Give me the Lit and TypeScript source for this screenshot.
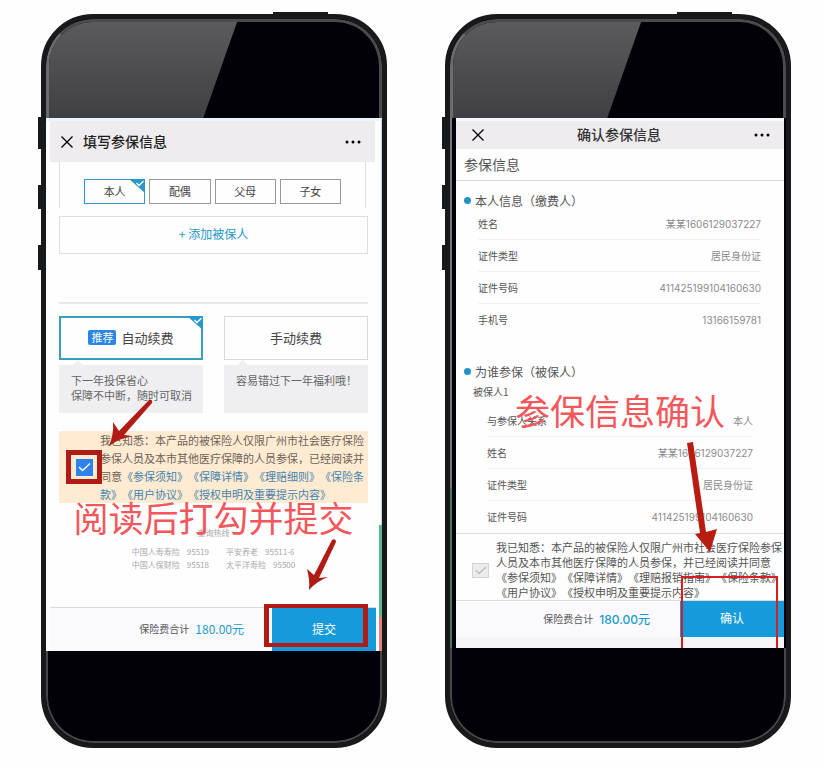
import { LitElement, html, css, svg } from "lit";
import { customElement, property } from "lit/decorators.js";

const base = css`
  *, *::before, *::after { box-sizing: border-box; }
  button, input { margin: 0; padding: 0; font: inherit; border-radius: 0; }
  button { cursor: pointer; }
  a { text-decoration: none; color: inherit; }
  h1, h2, h3, p, dl, dd, dt { margin: 0; font-weight: 400; font-size: inherit; }
  .bar { display: flex; align-items: center; background: #eeecee; }
  .bar h1 { padding-bottom: 2px; }
  .icon-button { border: 0; background: none; display: flex; }
  .caption {
    position: absolute; left: 0; right: 0; text-align: center; white-space: nowrap;
    font-size: 35px; line-height: 36px; color: #f2575c; pointer-events: none; z-index: 2;
  }
  .arrow { position: absolute; overflow: visible; pointer-events: none; z-index: 3; }
  .checkbox { position: relative; display: flex; }
  .checkbox input { appearance: none; display: block; }
  .checkbox .tick { position: absolute; inset: 0; margin: auto; pointer-events: none; }
  .total { display: flex; align-items: center; gap: 6px; margin-left: auto; padding-bottom: 2px; font-size: 10px; color: #555; }
  .price { font-size: 12px; color: #1c9bcf; }
  .footer { display: flex; align-items: stretch; background: #fafafd; border-top: 1px solid #dcdce0; }
  .pay { position: relative; display: flex; }
  .pay button { flex: 1; padding-bottom: 3px; border: 0; background: #159adc; color: #fff; font-size: 12px; }
`;

const closeIcon = svg`<svg width="12" height="12" viewBox="0 0 12 12" fill="none" stroke="currentColor" stroke-width="1.3"><path d="M.5 .5 11.5 11.5M11.5 .5 .5 11.5"/></svg>`;
const moreIcon = svg`<svg width="16" height="4" viewBox="0 0 16 4" fill="currentColor"><circle cx="2" cy="2" r="1.5"/><circle cx="8" cy="2" r="1.5"/><circle cx="14" cy="2" r="1.5"/></svg>`;

@customElement("phone-frame")
export class PhoneFrame extends LitElement {
  static styles = [base, css`
    :host { display: block; position: relative; min-width: 0; }
    .key { position: absolute; background: #17191b; }
    .power { top: -2px; right: 59px; width: 55px; height: 4px; }
    .mute { left: -3px; top: 103px; width: 5px; height: 32px; }
    .up { left: -3px; top: 171px; width: 5px; height: 24px; }
    .down { left: -3px; top: 231px; width: 5px; height: 25px; }
    .shell { position: relative; border: 5px solid #17191b; border-radius: 52px; background: #020108; overflow: hidden; }
    .top { height: 99px; border: 3px solid #4b4b4f; border-left-color: #6c6c6f; border-bottom: 0; border-radius: 47px 47px 0 0; overflow: hidden; }
    .glare { height: 100%; width: 57%; background: linear-gradient(#5b5b5d, #403f43); clip-path: polygon(0 0, 100% 0, 82% 100%, 0 100%); }
    .bottom { height: 92px; border: 2px solid #47474b; border-top: 0; border-radius: 0 0 47px 47px; }
    :host([tall]) .bottom { height: 95px; }
  `];
  render() {
    return html`
      <div class="key power"></div><div class="key mute"></div>
      <div class="key up"></div><div class="key down"></div>
      <div class="shell">
        <div class="top"><div class="glare"></div></div>
        <slot></slot>
        <div class="bottom"></div>
      </div>`;
  }
}

@customElement("fill-screen")
export class FillScreen extends LitElement {
  static styles = [base, css`
    :host { display: block; position: relative; background: #fefefe; border-top: 3px solid #edf4fb; border-right: 1px solid #bfd5e6; color: #555; }
    .bar { height: 41px; margin: 0 6px 0 4px; padding: 0 14px 0 11px; gap: 10px; color: #1e1e20; }
    .bar h1 { flex: 1; font-size: 14px; font-weight: 500; }
    .body { margin: 0 13px; }
    .relations { display: grid; grid-template-columns: repeat(4, 1fr); gap: 4px; margin-right: 2px; padding: 17px 24px 4px; border: solid #dcdfe2; border-width: 0 1px; }
    .choice { position: relative; display: flex; align-items: center; justify-content: center; padding-bottom: 2px; color: #444; }
    .choice input { appearance: none; position: absolute; inset: 0; border: 1px solid #999; }
    .choice input:checked { border: 1px solid #2f9fc8; }
    .choice .corner { position: absolute; top: 0; right: 0; display: none; }
    .choice input:checked ~ .corner { display: block; }
    .small { height: 25px; font-size: 11px; }
    .large { height: 44px; font-size: 13px; gap: 5px; }
    .large input { border-color: #d8dadd; }
    .large input:checked { border: 2px solid #38a0be; }
    .badge { padding: 0 3px; border-radius: 2px; background: #2a86e6; color: #fff; font-size: 11px; line-height: 15px; }
    .add { display: block; width: 100%; height: 38px; margin-top: 8px; padding-bottom: 4px; border: 1px solid #dcdfe2; background: none; color: #2797c8; font-size: 12px; }
    .rule { border: 0; height: 2px; margin: 48px 0 12px; background: #e6e9ec; }
    .renewals { display: grid; grid-template-columns: 1fr 1fr; column-gap: 21px; row-gap: 5px; }
    .note { position: relative; min-height: 48px; padding: 8px 0 10px 12px; background: #efeef1; font-size: 11px; line-height: 15px; white-space: nowrap; color: #666; }
    .note::before { content: ""; position: absolute; left: 14px; top: -5px; border: solid transparent; border-width: 0 5px 5px; border-bottom-color: #efeef1; }
    .consent { display: flex; align-items: center; margin-top: 18px; padding: 0 0 0 17px; gap: 7px; background: #ffebd2; font-size: 11px; line-height: 18px; color: #6d6257; }
    .consent p { flex: 1; text-spacing-trim: space-all; }
    .consent a { color: #4583ae; }
    .checkbox input { width: 17px; height: 17px; background: #2a82ea; }
    .mark { position: absolute; inset: -9px -9px -8px -10px; border: 5px solid #b01b16; z-index: 2; }
    .arrow.to-check { left: 30px; bottom: 30px; }
    .hotline { position: relative; padding: 23px 0 36px; font-size: 8px; line-height: 13px; color: #a9a9a9; }
    .hotline h2 { text-align: center; margin-bottom: 6px; }
    .hotline .caption { top: -4px; }
    .lines { display: grid; grid-template-columns: auto auto; justify-content: center; column-gap: 17px; }
    .lines div { display: flex; gap: 7px; }
    .footer { margin: 0 5px 0 4px; }
    .total { padding-right: 28px; }
    .pay { width: 104px; height: 43px; }
    .pay .mark { inset: -4px 8px 4px -8px; border-width: 4px 5px; }
    .arrow.to-pay { left: 34px; top: -70px; }
    .edge { position: absolute; right: -1px; bottom: 0; width: 3px; height: 126px; background: linear-gradient(#5cb88e 92px, #e5807c 92px); }
  `];
  private corner = svg`<svg class="corner" width="16" height="14" viewBox="0 0 16 14"><path d="M0 0H16V14Z" fill="#2797c8"/><path d="M7.500 4 10 6.500 14.500 2" fill="none" stroke="#fff" stroke-width="1.300"/></svg>`;
  render() {
    return html`
      <header class="bar">
        <button class="icon-button" aria-label="关闭">${closeIcon}</button>
        <h1>填写参保信息</h1>
        <button class="icon-button" aria-label="更多">${moreIcon}</button>
      </header>
      <div class="body">
        <div class="relations">
          ${["本人", "配偶", "父母", "子女"].map((name, i) => html`
            <label class="choice small"><input type="radio" name="relation" .checked=${i === 0}>${this.corner}<span>${name}</span></label>`)}
        </div>
        <button class="add">+ 添加被保人</button>
        <hr class="rule">
        <div class="renewals">
          <label class="choice large"><input type="radio" name="renewal" .checked=${true}>${this.corner}<span class="badge">推荐</span><span>自动续费</span></label>
          <label class="choice large"><input type="radio" name="renewal"><span>手动续费</span></label>
          <p class="note">下一年投保省心<br>保障不中断，随时可取消</p>
          <p class="note">容易错过下一年福利哦！</p>
        </div>
        <div class="consent">
          <div class="checkbox">
            <input id="agree" type="checkbox" .checked=${true} aria-label="我已知悉">
            <svg class="tick" width="13" height="10" viewBox="0 0 13 10" fill="none" stroke="#fff" stroke-width="1.500"><path d="M1 5 4.500 8.500 12 1.500"/></svg>
            <span class="mark"></span>
            <svg class="arrow to-check" width="46" height="46" viewBox="0 0 46 46" fill="#b01b16"><path d="M43 0Q47-1 46 3L18 35 26 36Q14 38 3 46Q8 34 7 22L13 31Z"/></svg>
          </div>
          <p><label for="agree">我已知悉：本产品的被保险人仅限广州市社会医疗保险参保人员及本市其他医疗保障的人员参保，已经阅读并同意</label><a href="#">《参保须知》</a><a href="#">《保障详情》</a><a href="#">《理赔细则》</a><a href="#">《保险条款》</a><a href="#">《用户协议》</a><a href="#">《授权申明及重要提示内容》</a></p>
        </div>
        <section class="hotline">
          <div class="caption">阅读后打勾并提交</div>
          <h2>查询热线</h2>
          <dl class="lines">
            ${[["中国人寿寿险", "95519"], ["平安养老", "95511-6"], ["中国人保财险", "95518"], ["太平洋寿险", "95500"]].map(
              ([name, tel]) => html`<div><dt>${name}</dt><dd>${tel}</dd></div>`)}
          </dl>
        </section>
      </div>
      <footer class="footer">
        <div class="total">保险费合计<span class="price">180.00元</span></div>
        <div class="pay">
          <button>提交</button><span class="mark"></span>
          <svg class="arrow to-pay" width="30" height="54" viewBox="0 0 30 54" fill="#b01b16"><path d="M26 2Q30 0 30 4L13 40 22 39Q11 43 3 52Q4 42 1 31L8 37Z"/></svg>
        </div>
      </footer>
      <div class="edge"></div>`;
  }
}

@customElement("info-rows")
export class InfoRows extends LitElement {
  static styles = [base, css`
    :host { display: block; }
    .row { display: flex; justify-content: space-between; align-items: center; height: 32px; border-bottom: 1px solid #f1f1f3; font-size: 10px; color: #555; }
    .row:last-child { border-bottom-color: transparent; }
    .row dd { font-family: Inter, "Noto Sans CJK SC", sans-serif; color: #8c8c8c; }
  `];
  @property({ attribute: false }) rows: string[][] = [];
  render() {
    return html`<dl>${this.rows.map(([k, v]) => html`<div class="row"><dt>${k}</dt><dd>${v}</dd></div>`)}</dl>`;
  }
}

@customElement("confirm-screen")
export class ConfirmScreen extends LitElement {
  static styles = [base, css`
    :host { display: block; position: relative; padding: 0 2px 0 6px; color: #555; }
    .edge { position: absolute; left: 0; top: 0; bottom: 0; width: 2px; background: linear-gradient(to top, #4d7560 160px, #77777b 160px); }
    .page { background: #fefefe; border-top: 3px solid #f5f8fc; }
    .bar { height: 28px; padding: 0 14px 0 16px; color: #555; }
    .bar h1 { flex: 1; text-align: center; font-size: 14px; font-weight: 500; color: #333; }
    .title { height: 32px; padding-left: 8px; border-bottom: 1px solid #dcdcde; font-size: 14px; line-height: 31px; }
    .group { padding: 12px 0 0 8px; }
    .group + .group { position: relative; padding-top: 28px; }
    .group h3 { display: flex; align-items: center; gap: 4px; font-size: 12px; line-height: 15px; text-spacing-trim: space-all; }
    .group h3::before { content: ""; width: 7px; height: 7px; border-radius: 50%; background: #2492c8; }
    .own { margin: 0 23px 0 14px; }
    .insured { margin: 0 31px 0 23px; }
    .who { margin: 5px 0 6px 9px; font-size: 10px; line-height: 15px; }
    .group .caption { top: 56px; }
    .consent { display: flex; align-items: center; padding: 6px 0 0 16px; gap: 7px; border-top: 1px solid #dcdcde; font-size: 11px; line-height: 15px; }
    .consent p { flex: 1; text-spacing-trim: space-all; }
    .checkbox input { width: 17px; height: 15px; background: #ececee; border: 1px solid #d4d4d6; }
    .total { padding-right: 30px; }
    .price { font-weight: 500; font-family: Inter, "Noto Sans CJK SC", sans-serif; }
    .pay { width: 104px; height: 36px; }
    .frame { position: absolute; inset: -25px 6px -11px 1px; border: 2px solid #d51f22; border-bottom: 0; pointer-events: none; }
    .arrow { left: 7px; top: -159px; }
    .rest { height: 11px; background: #f6f6f9; }
  `];
  render() {
    return html`
      <div class="edge"></div>
      <div class="page">
        <header class="bar">
          <button class="icon-button" aria-label="关闭">${closeIcon}</button>
          <h1>确认参保信息</h1>
          <button class="icon-button" aria-label="更多">${moreIcon}</button>
        </header>
        <h2 class="title">参保信息</h2>
        <section class="group">
          <h3>本人信息（缴费人）</h3>
          <info-rows class="own" .rows=${[["姓名", "某某1606129037227"], ["证件类型", "居民身份证"], ["证件号码", "411425199104160630"], ["手机号", "13166159781"]]}></info-rows>
        </section>
        <section class="group">
          <h3>为谁参保（被保人）</h3>
          <p class="who">被保人1</p>
          <info-rows class="insured" .rows=${[["与参保人关系", "本人"], ["姓名", "某某1606129037227"], ["证件类型", "居民身份证"], ["证件号码", "411425199104160630"]]}></info-rows>
          <div class="caption">参保信息确认</div>
        </section>
        <div class="consent">
          <div class="checkbox">
            <input id="agree" type="checkbox" aria-label="我已知悉">
            <svg class="tick" width="12" height="9" viewBox="0 0 12 9" fill="none" stroke="#bbb" stroke-width="1.300"><path d="M1 4.500 4 7.500 11 1"/></svg>
          </div>
          <p><label for="agree">我已知悉：本产品的被保险人仅限广州市社会医疗保险参保人员及本市其他医疗保障的人员参保，并已经阅读并同意</label><a href="#">《参保须知》</a><a href="#">《保障详情》</a><a href="#">《理赔报销指南》</a><a href="#">《保险条款》</a><a href="#">《用户协议》</a><a href="#">《授权申明及重要提示内容》</a></p>
        </div>
        <footer class="footer">
          <div class="total">保险费合计<span class="price">180.00元</span></div>
          <div class="pay">
            <button>确认</button><span class="frame"></span>
            <svg class="arrow" width="32" height="110" viewBox="0 0 32 110" fill="#b91d12"><path d="M0 1 6 0 19 90 30 87 23 110 8 92 13 91Z"/></svg>
          </div>
        </footer>
        <div class="rest"></div>
      </div>`;
  }
}

@customElement("app-root")
export class AppRoot extends LitElement {
  static styles = css`
    :host { display: block; min-height: 100vh; box-sizing: border-box; padding: 14px 33px 19px 41px; background: #fefefe; font-family: "Noto Sans CJK SC", "Noto Sans", sans-serif; }
    .phones { display: grid; grid-template-columns: 1fr 1fr; align-items: start; gap: 58px; }
  `;
  render() {
    return html`
      <main class="phones">
        <phone-frame><fill-screen></fill-screen></phone-frame>
        <phone-frame tall><confirm-screen></confirm-screen></phone-frame>
      </main>`;
  }
}
